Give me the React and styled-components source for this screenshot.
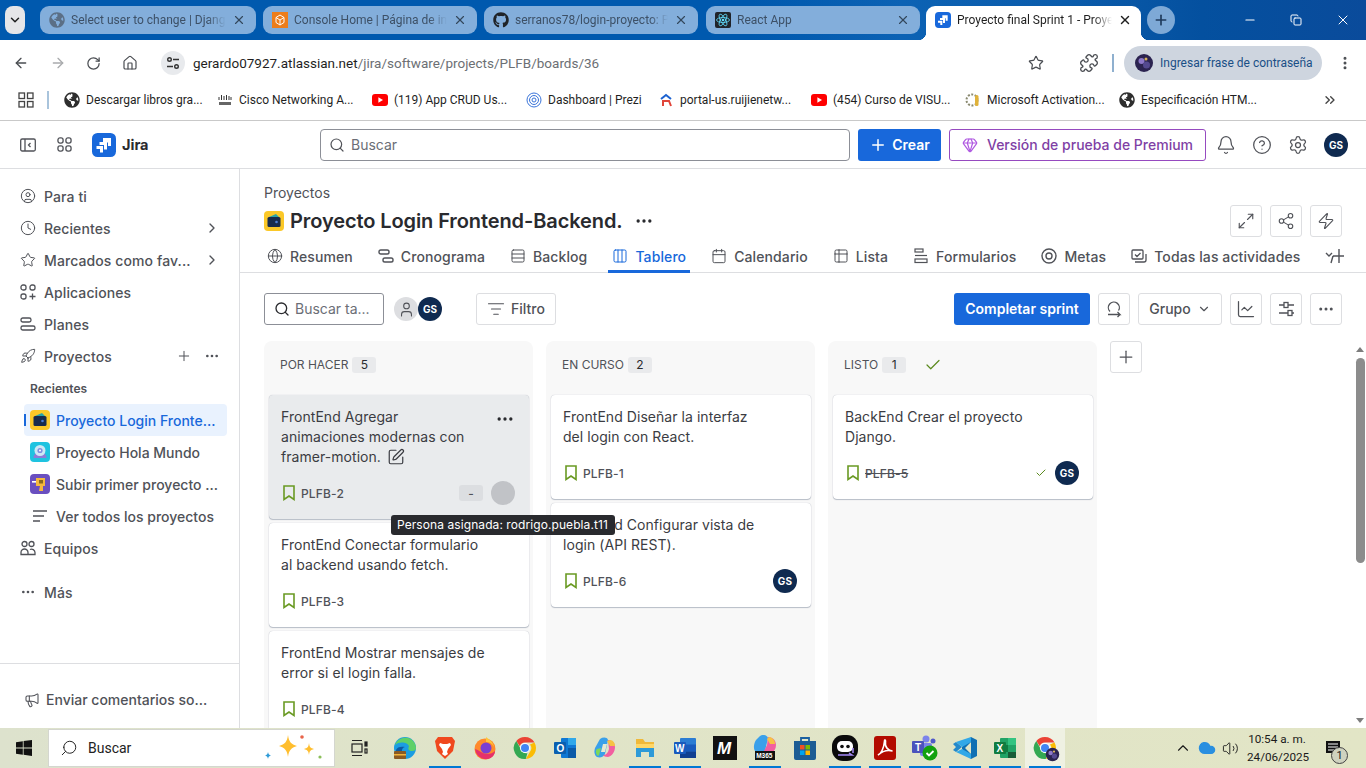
import React from 'react';
import styled, { createGlobalStyle } from 'styled-components';
import {
  ArrowLeft, ArrowRight, RotateCw, Star, Puzzle, EllipsisVertical, ChevronsRight, ChevronDown, ChevronRight,
  X, Plus, Minus, Clock, CircleUser, Rocket, Ellipsis, Megaphone, Search, Bell, CircleHelp, Settings,
  Gem, Globe, Calendar, Table2, Columns3, Rows3, Maximize2, Share2, Zap, ChartLine, ListFilter, Check,
  SquarePen, User, Volume2, ChevronUp, Cloud, Copy, House
} from 'lucide-react';
import { FaGithub, FaGlobeAmericas } from 'react-icons/fa';

const GlobalStyle = createGlobalStyle`
  html, body { margin: 0; padding: 0; height: 100%; overflow: hidden; background: #fff; }
  * { box-sizing: border-box; }
  #root { font-family: Inter, "Liberation Sans", sans-serif; }
`

const Page = styled.div`
  position: relative;
  width: 1366px;
  height: 768px;
  display: flex;
  flex-direction: column;
  overflow: hidden;
  background: #fff;
`

/* browser chrome */
const TabStrip = styled.div`
  height: 40px;
  flex: none;
  display: flex;
  align-items: flex-start;
  padding: 6px 0 0 5px;
  background: linear-gradient(90deg, #0059ae 0%, #0059ae 55%, #0c62b4 66%, #0b5cab 78%, #04509f 88%, #0a4b9b 100%);
  font-family: Roboto, "Liberation Sans", sans-serif;
`
const TabMenu = styled.div`
  width: 20px;
  height: 28px;
  margin-right: 15px;
  border-radius: 8px;
  background: #e6e6e8;
  display: flex;
  align-items: center;
  justify-content: center;
  color: #1f1f1f;
`
const Tab = styled.div`
  width: ${p => p.$w}px;
  margin-right: ${p => p.$mr}px;
  height: ${p => (p.$active ? 34 : 28)}px;
  flex: none;
  position: relative;
  display: flex;
  align-items: center;
  padding: ${p => (p.$active ? '0 9px 6px 9px' : '0 10px 0 9px')};
  gap: 6px;
  font-size: 12px;
  color: ${p => (p.$active ? '#1f1f1f' : '#3d5066')};
  background: ${p => (p.$active ? '#fff' : '#83aedb')};
  border-radius: ${p => (p.$active ? '9px 9px 0 0' : '9px')};
  ${p => p.$active && `
    &::before, &::after {
      content: '';
      position: absolute;
      bottom: 0;
      width: 8px;
      height: 8px;
    }
    &::before { left: -8px; background: radial-gradient(circle at 0 0, transparent 8px, #fff 8.5px); }
    &::after { right: -8px; background: radial-gradient(circle at 100% 0, transparent 8px, #fff 8.5px); }
  `}
`
const TabTitle = styled.span`
  flex: 1;
  white-space: nowrap;
  overflow: hidden;
  -webkit-mask-image: linear-gradient(90deg, #000 88%, transparent);
  mask-image: linear-gradient(90deg, #000 88%, transparent);
`
const TabClose = styled(X)`
  flex: none;
  color: ${p => (p.$active ? '#1f1f1f' : '#33475c')};
`
const NewTab = styled.div`
  width: 28px;
  height: 28px;
  margin-left: 6px;
  border-radius: 50%;
  background: #7ea9d6;
  color: #1f3a5c;
  display: flex;
  align-items: center;
  justify-content: center;
`
const WindowButtons = styled.div`
  margin-left: auto;
  display: flex;
  align-items: center;
  height: 28px;
  color: #fff;
  padding-right: 15px;
  gap: 33px;
`
const AddressRow = styled.div`
  height: 44px;
  flex: none;
  display: flex;
  align-items: center;
  padding: 2px 13px 0 13px;
  color: #4a4d52;
  font-family: Roboto, "Liberation Sans", sans-serif;
`
const NavIcons = styled.div`
  display: flex;
  align-items: center;
  gap: 20.5px;
  width: 148px;
`
const SiteBadge = styled.div`
  width: 24px;
  height: 24px;
  border-radius: 50%;
  background: #e8eaed;
  display: flex;
  align-items: center;
  justify-content: center;
  color: #333;
  margin-right: 8px;
`
const Url = styled.div`
  font-size: 13.5px;
  color: #6c6f74;
  flex: 1;
  b { font-weight: 400; color: #1f1f1f; }
`
const RightTools = styled.div`
  display: flex;
  align-items: center;
  gap: 13px;
`
const BookmarkStar = styled(Star)`
  margin-right: 22px;
`
const ToolDivider = styled.div`
  width: 2px;
  height: 18px;
  background: #8fb0cf;
`
const ProfilePill = styled.div`
  width: 198px;
  height: 34px;
  border-radius: 17px;
  background: #ced5df;
  margin-left: -3px;
  margin-right: 2px;
  display: flex;
  align-items: center;
  gap: 6px;
  padding-left: 10px;
  font-size: 12px;
  color: #1a4f86;
`
const BookmarkBar = styled.div`
  height: 37px;
  flex: none;
  display: flex;
  align-items: center;
  padding: 0 0 4px 18px;
  border-bottom: 1px solid #c9c9c9;
  font-family: Roboto, "Liberation Sans", sans-serif;
  font-size: 12px;
  color: #1f1f1f;
`
const BarDivider = styled.div`
  width: 2px;
  height: 18px;
  margin: 0 15px 0 13px;
  background: #a9c4dc;
`
const BookmarkItem = styled.div`
  width: ${p => p.$w}px;
  flex: none;
  display: flex;
  align-items: center;
  gap: 6px;
  white-space: nowrap;
  overflow: hidden;
`
const MoreBookmarks = styled.div`
  margin-left: auto;
  padding-right: 28px;
  display: flex;
  color: #444;
`

/* jira top bar */
const JiraHeader = styled.header`
  height: 48px;
  flex: none;
  display: flex;
  align-items: center;
  padding-left: 20px;
  border-bottom: 1px solid #dddee1;
  color: #505258;
`
const HeaderLeft = styled.div`
  width: 300px;
  flex: none;
  display: flex;
  align-items: center;
  gap: 20px;
`
const AppGrid = styled.svg`
  margin-left: 1px;
`
const LogoWrap = styled.div`
  display: flex;
  align-items: center;
  gap: 6px;
  font-weight: 700;
  font-size: 14.5px;
  color: #292a2e;
`
const GlobalSearch = styled.div`
  width: 530px;
  height: 32px;
  border: 1px solid #8c8f97;
  border-radius: 4px;
  display: flex;
  align-items: center;
  gap: 6px;
  padding-left: 8px;
  font-size: 14px;
  color: #6b6e76;
`
const CreateButton = styled.div`
  width: 83px;
  height: 32px;
  margin-left: 8px;
  border-radius: 3px;
  background: #1868db;
  color: #fff;
  font-size: 14px;
  font-weight: 600;
  display: flex;
  align-items: center;
  justify-content: center;
  gap: 5px;
`
const PremiumButton = styled.div`
  width: 257px;
  height: 32px;
  margin-left: 8px;
  border: 1px solid #964ac0;
  border-radius: 3px;
  color: #803fa5;
  font-size: 14px;
  font-weight: 500;
  display: flex;
  align-items: center;
  justify-content: center;
  gap: 9px;
`
const HeaderIcons = styled.div`
  display: flex;
  align-items: center;
  gap: 16px;
  margin-left: 10px;
  color: #505258;
`
const Avatar = styled.div`
  width: 24px;
  height: 24px;
  flex: none;
  border-radius: 50%;
  background: ${p => p.$bg || '#0f2a50'};
  color: ${p => p.$fg || '#fff'};
  font-size: 10px;
  font-weight: 700;
  display: flex;
  align-items: center;
  justify-content: center;
`

/* body */
const Body = styled.div`
  flex: 1;
  min-height: 0;
  display: flex;
`
const Sidebar = styled.aside`
  width: 240px;
  flex: none;
  display: flex;
  flex-direction: column;
  border-right: 1px solid #dddee1;
  padding-top: 11px;
  color: #505258;
  font-size: 14px;
  font-weight: 500;
`
const NavRow = styled.div`
  height: 32px;
  flex: none;
  display: flex;
  align-items: center;
  gap: 8px;
  padding: 0 20px;
  margin-top: ${p => p.$mt || 0}px;
  letter-spacing: .1px;
  white-space: nowrap;
`
const NavIcon = styled.span`
  width: 16px;
  flex: none;
  display: flex;
  justify-content: center;
`
const NavEnd = styled.div`
  margin-left: auto;
  display: flex;
  align-items: center;
  gap: 12px;
  margin-right: -1px;
`
const SubLabel = styled.div`
  height: 32px;
  flex: none;
  display: flex;
  align-items: center;
  padding-left: 30px;
  font-size: 12px;
  font-weight: 600;
  color: #505258;
`
const ProjectRow = styled.div`
  position: relative;
  width: 203px;
  height: 32px;
  flex: none;
  margin-left: 24px;
  padding-left: 6px;
  display: flex;
  align-items: center;
  gap: 6px;
  border-radius: 4px;
  white-space: nowrap;
  color: ${p => (p.$active ? '#1868db' : '#505258')};
  background: ${p => (p.$active ? '#e9f2fe' : 'transparent')};
  ${p => p.$active && `
    &::before {
      content: '';
      position: absolute;
      left: 0;
      top: 10px;
      width: 2px;
      height: 12px;
      background: #1868db;
    }
  `}
`
const AllProjectsIcon = styled.div`
  width: 20px;
  display: flex;
  justify-content: center;
`
const SideFooter = styled.div`
  margin-top: auto;
  height: 65px;
  flex: none;
  border-top: 1px solid #dddee1;
  display: flex;
  align-items: center;
  gap: 6px;
  padding: 7px 0 0 24px;
`
const Main = styled.main`
  flex: 1;
  min-width: 0;
  display: flex;
  flex-direction: column;
`
const ProjectHead = styled.div`
  flex: none;
  padding: 14px 24px 0;
`
const Breadcrumb = styled.div`
  height: 20px;
  font-size: 14px;
  line-height: 20px;
  color: #505258;
`
const TitleRow = styled.div`
  height: 36px;
  display: flex;
  align-items: center;
  gap: 6px;
`
const Title = styled.h1`
  margin: 0;
  font-size: 20px;
  font-weight: 600;
  letter-spacing: -.1px;
  color: #292a2e;
  white-space: nowrap;
`
const TitleMore = styled.div`
  display: flex;
  margin-left: 5px;
  color: #292a2e;
`
const ActionGroup = styled.div`
  margin-left: auto;
  display: flex;
  gap: 8px;
`
const SquareButton = styled.div`
  width: 32px;
  height: 32px;
  flex: none;
  border: 1px solid #dddee1;
  border-radius: 3px;
  color: #505258;
  background: #fff;
  display: flex;
  align-items: center;
  justify-content: center;
`
const TabsRow = styled.nav`
  height: 34px;
  flex: none;
  display: flex;
  gap: 17px;
  padding: 3px 0 0 23px;
  border-bottom: 1px solid #dddee1;
`
const ViewTab = styled.div`
  height: 31px;
  margin-bottom: -1px;
  display: flex;
  align-items: center;
  gap: 7px;
  padding: 0 4px;
  font-size: 14px;
  font-weight: 500;
  letter-spacing: .1px;
  white-space: nowrap;
  color: ${p => (p.$active ? '#1868db' : '#505258')};
  border-bottom: 3px solid ${p => (p.$active ? '#1868db' : 'transparent')};
`
const Toolbar = styled.div`
  height: 32px;
  flex: none;
  margin: 20px 24px 16px;
  display: flex;
  align-items: center;
  gap: 8px;
`
const BoardSearch = styled.div`
  width: 120px;
  height: 32px;
  border: 1px solid #8c8f97;
  border-radius: 3px;
  display: flex;
  align-items: center;
  gap: 5px;
  padding: 0 0 1px 9px;
  font-size: 14px;
  color: #6b6e76;
`
const AvatarStack = styled.div`
  display: flex;
  margin-left: 2px;
  width: 74px;
`
const OutlineButton = styled.div`
  width: ${p => p.$w}px;
  height: 32px;
  flex: none;
  border: 1px solid #dddee1;
  border-radius: 3px;
  display: flex;
  align-items: center;
  justify-content: center;
  gap: 6px;
  padding-bottom: 1px;
  font-size: 14px;
  font-weight: 500;
  color: #505258;
`
const PrimaryButton = styled.div`
  width: 136px;
  height: 32px;
  margin-left: auto;
  padding-bottom: 1px;
  border-radius: 3px;
  background: #1868db;
  color: #fff;
  font-size: 14px;
  font-weight: 600;
  display: flex;
  align-items: center;
  justify-content: center;
`
const BoardArea = styled.div`
  flex: 1;
  min-height: 0;
  display: flex;
  overflow: hidden;
`
const Columns = styled.div`
  flex: 1;
  display: flex;
  gap: 13px;
  padding-left: 24px;
`
const Column = styled.section`
  width: 269px;
  flex: none;
  background: #f8f8f8;
  border-radius: 8px 8px 0 0;
  padding: 0 4px 0 5px;
`
const ColumnHead = styled.div`
  height: 54px;
  display: flex;
  align-items: center;
  gap: 4px;
  padding: 0 0 7px 11px;
  font-size: 12px;
  font-weight: 400;
  color: #505258;
`
const Count = styled.span`
  min-width: 24px;
  height: 16px;
  border-radius: 3px;
  background: #e9eaec;
  color: #292a2e;
  font-size: 12px;
  display: flex;
  align-items: center;
  justify-content: center;
`
const DoneCheck = styled(Check)`
  margin-left: 14px;
  color: #5b8a1e;
`
const Card = styled.article`
  position: relative;
  width: 260px;
  margin-bottom: 4px;
  padding: 12px 13px 14px 12px;
  border-radius: 4px;
  background: ${p => (p.$hover ? '#e9ebed' : '#fff')};
  box-shadow: 0 1px 1px rgba(9, 30, 66, .25), 0 0 1px rgba(9, 30, 66, .3);
`
const CardTitle = styled.div`
  font-size: 14px;
  line-height: 20px;
  letter-spacing: .05px;
  color: #3b3c42;
  white-space: nowrap;
  svg { vertical-align: -4px; margin-left: 6px; color: #3b3c42; }
`
const CardMenu = styled.div`
  position: absolute;
  top: 14px;
  right: 14px;
  display: flex;
  color: #292a2e;
`
const CardFoot = styled.div`
  height: 24px;
  margin-top: 14px;
  display: flex;
  align-items: center;
  gap: 6px;
  padding-left: 2px;
  font-size: 12px;
  font-weight: 500;
  letter-spacing: .15px;
  color: #505258;
`
const CardKey = styled.span`
  text-decoration: ${p => (p.$done ? 'line-through' : 'none')};
`
const FootEnd = styled.div`
  margin-left: auto;
  display: flex;
  align-items: center;
  gap: 8px;
  margin-right: 1px;
`
const EstimateTag = styled.span`
  width: 24px;
  height: 16px;
  border-radius: 3px;
  background: #dcdee1;
  display: flex;
  align-items: center;
  justify-content: center;
`
const ScrollTrack = styled.div`
  width: 12px;
  flex: none;
  display: flex;
  flex-direction: column;
  align-items: center;
  padding-top: 6px;
`
const ScrollArrow = styled.div`
  width: 0;
  height: 0;
  border-left: 4px solid transparent;
  border-right: 4px solid transparent;
  border-${p => (p.$down ? 'top' : 'bottom')}: 5px solid #7d7d7d;
  margin-top: ${p => (p.$down ? 'auto' : 0)};
  margin-bottom: ${p => (p.$down ? 5 : 0)}px;
`
const ScrollThumb = styled.div`
  width: 9px;
  height: 205px;
  margin-top: 6px;
  border-radius: 5px;
  background: #8c8c8c;
`
const Tooltip = styled.div`
  position: absolute;
  left: 391px;
  top: 515px;
  height: 20px;
  width: 224px;
  padding-left: 6px;
  border-radius: 3px;
  background: #292a2e;
  color: #fff;
  font-size: 12px;
  letter-spacing: .08px;
  line-height: 20px;
  white-space: nowrap;
`

/* windows taskbar */
const Taskbar = styled.footer`
  height: 40px;
  flex: none;
  display: flex;
  align-items: center;
  background: linear-gradient(90deg, #dde2cd 0%, #e0e4c8 40%, #e2e5c6 100%);
  font-family: Roboto, "Liberation Sans", sans-serif;
`
const StartButton = styled.div`
  width: 48px;
  display: flex;
  justify-content: center;
`
const TaskSearch = styled.div`
  width: 287px;
  height: 38px;
  background: #fff;
  border: 1px solid #d4d6cf;
  display: flex;
  align-items: center;
  gap: 10px;
  padding-left: 11px;
  font-size: 14px;
  color: #222;
`
const TiltedSearch = styled(Search)`
  transform: scaleX(-1);
`
const TaskSpark = styled.div`
  margin-left: auto;
  display: flex;
  padding-right: 4px;
`
const TaskApps = styled.div`
  display: flex;
  align-items: center;
  height: 40px;
  margin-left: 4px;
`
const TaskApp = styled.div`
  position: relative;
  width: 40px;
  height: 40px;
  margin-right: ${p => p.$mr || 0}px;
  display: flex;
  align-items: center;
  justify-content: center;
  background: ${p => (p.$current ? '#eff1e3' : 'transparent')};
  ${p => p.$running && `
    &::after {
      content: '';
      position: absolute;
      left: 4px;
      right: 4px;
      bottom: 0;
      height: 2px;
      background: #0078d4;
    }
  `}
`
const ProfileOverlay = styled.span`
  position: absolute;
  right: 5px;
  bottom: 6px;
  display: flex;
`
const Tray = styled.div`
  margin-left: auto;
  display: flex;
  align-items: center;
  height: 40px;
  color: #1a1a1a;
`
const TrayIcons = styled.div`
  display: flex;
  align-items: center;
  gap: 6px;
`
const ClockText = styled.div`
  width: 60px;
  margin: 0 6px 0 8px;
  text-align: center;
  font-size: 11.7px;
  line-height: 18px;
  white-space: nowrap;
`
const NotifyWrap = styled.div`
  position: relative;
  width: 40px;
  height: 40px;
  display: flex;
  align-items: center;
  justify-content: center;
  margin-right: 13px;
`
const NotifyBadge = styled.span`
  position: absolute;
  right: 5px;
  bottom: 4px;
  width: 17px;
  height: 17px;
  border-radius: 50%;
  border: 1px solid #444;
  background: #cfd2bf;
  font-size: 11px;
  text-align: center;
  line-height: 15px;
`

const JiraLogo = ({ size = 24 }) => (
  <svg width={size} height={size} viewBox="0 0 24 24">
    <rect width="24" height="24" rx="5.5" fill="#1868db" />
    <path fill="#fff" d="M11 5h8v8h-3V9.500h-5zM7.500 9H15v7.500h-3V12H7.500zM4.500 13H11v6.500H8V16H4.500z" />
  </svg>
)
const WalletIcon = ({ size = 20 }) => (
  <svg width={size} height={size} viewBox="0 0 20 20">
    <rect width="20" height="20" rx="4" fill="#fbc828" />
    <path fill="#2aa3a8" d="M5 6l7-3 3 3z" />
    <rect x="3.500" y="6" width="13" height="10" rx="1.500" fill="#172b4d" />
    <circle cx="12.500" cy="11" r="1.300" fill="#4c7fd6" />
  </svg>
)
const WebcamIcon = () => (
  <svg width="20" height="20" viewBox="0 0 20 20">
    <rect width="20" height="20" rx="4" fill="#1fc3e0" />
    <path fill="#8e7cd8" d="M3.500 16a6.500 6.500 0 0 1 13 0z" />
    <circle cx="10" cy="8.500" r="5.500" fill="#cde8f5" />
    <circle cx="10" cy="8.500" r="2.600" fill="#7f8fe0" />
    <circle cx="10" cy="8.500" r="1" fill="#fff" />
  </svg>
)
const DrillIcon = () => (
  <svg width="20" height="20" viewBox="0 0 20 20">
    <rect width="20" height="20" rx="4" fill="#6a4fbf" />
    <rect x="2" y="7" width="4" height="1.600" fill="#fff" />
    <path fill="#f5b83d" d="M6 4h9v8h-2v5h-4l1-5H6z" />
    <rect x="9" y="6" width="4" height="3.500" fill="#8a6a1e" />
  </svg>
)
const ChromeIcon = ({ size = 24 }) => (
  <svg width={size} height={size} viewBox="0 0 24 24">
    <path fill="#ea4335" d="M12 1a11 11 0 0 1 9.500 5.500H12a5.500 5.500 0 0 0-5.200 3.700L3.300 5A11 11 0 0 1 12 1z" />
    <path fill="#fbbc04" d="M21.500 6.500A11 11 0 0 1 12.800 23l4-7a5.500 5.500 0 0 0 .2-7.500z" />
    <path fill="#34a853" d="M12.800 23A11 11 0 0 1 3.300 5l4.600 8.200a5.500 5.500 0 0 0 6.500 4z" />
    <circle cx="12" cy="12" r="5" fill="#fff" />
    <circle cx="12" cy="12" r="4" fill="#4285f4" />
  </svg>
)
const YoutubeIcon = () => (
  <svg width="16" height="16" viewBox="0 0 16 16">
    <rect y="2" width="16" height="12" rx="3" fill="#f00" />
    <path fill="#fff" d="M6.400 5.200L11 8l-4.600 2.800z" />
  </svg>
)
const ProfileThumb = ({ size = 20 }) => (
  <svg width={size} height={size} viewBox="0 0 20 20">
    <circle cx="10" cy="10" r="9" fill="#2b2350" />
    <circle cx="7.500" cy="8" r="3" fill="#8d78c9" />
    <circle cx="12.500" cy="12" r="3.500" fill="#54498f" />
    <circle cx="12" cy="6" r="1.500" fill="#d9b45b" />
  </svg>
)
const IssueMark = () => (
  <svg width="12" height="16" viewBox="0 0 12 16" fill="none" stroke="#6a9a23" strokeWidth="1.600">
    <path d="M1 1h10v13.500L6 11l-5 3.500z" />
  </svg>
)
const SvgLetter = styled.text`
  font-family: "Liberation Sans", sans-serif;
  font-weight: 700;
`

const taskIcons = {
  edge: (
    <svg width="24" height="24" viewBox="0 0 24 24">
      <circle cx="12" cy="12" r="11" fill="#1b9de2" />
      <path fill="#5fd068" d="M2 9c2-6 8-8 13-7 5 1 8 6 8 10 0 2-2 3.500-5 3-3-.4-3-3-2-4.500C15 6 6 5 2 9z" />
      <path fill="#0c59a4" d="M3 14c0 5 5 9 10 9-3-1-5-5-4-9 .4-2 2-3 3-3-4-1-8 0-9 3z" />
      <rect x="1" y="15" width="12" height="8" rx="1" fill="#8a5a24" />
      <rect x="1" y="18" width="12" height="1.500" fill="#f2b33b" />
    </svg>
  ),
  brave: (
    <svg width="24" height="24" viewBox="0 0 24 24">
      <path fill="#f0481e" d="M5 1h14l3 4-2 10-8 8-8-8L2 5z" />
      <path fill="#fff" d="M7 7l3 1h4l3-1 1 2-3 4-1 3 1 2-3 2-3-2 1-2-1-3-3-4z" />
    </svg>
  ),
  firefox: (
    <svg width="24" height="24" viewBox="0 0 24 24">
      <circle cx="12" cy="13" r="10.500" fill="#ff8a2b" />
      <path fill="#e6316a" d="M2 13c1 7 7 11 13 10 4-1 7-4 7-8-3 3-8 4-12 2-3-1.500-5-3-8-4z" />
      <circle cx="13" cy="12" r="5.500" fill="#7a3fd1" />
      <path fill="#ffc63a" d="M13 1c2 2 7 4 8 10-2-4-5-5-8-5z" />
    </svg>
  ),
  outlook: (
    <svg width="24" height="24" viewBox="0 0 24 24">
      <rect x="8" y="2" width="15" height="20" rx="1" fill="#0f78d4" />
      <rect x="15" y="2" width="8" height="7" fill="#30a8ea" />
      <rect x="15" y="12" width="8" height="10" fill="#0a5aa8" />
      <rect x="1" y="6" width="12" height="12" rx="1" fill="#0a5fb0" />
      <SvgLetter x="3.500" y="16" fontSize="10" fill="#fff">O</SvgLetter>
    </svg>
  ),
  copilot: (
    <svg width="24" height="24" viewBox="0 0 24 24">
      <path fill="#3aa0ea" d="M7 3c3-2 7-2 8 1l-3 14c-1 3-5 4-8 3-3-2-3-6-2-9z" />
      <path fill="#f25fa0" d="M15 4c3 0 7 2 7 7 0 5-3 9-7 10-3 0-4-1-5-2 3 0 5-2 6-6z" />
      <path fill="#7fd858" d="M5 20c-2-1-3-5-1-7l4-1-2 7z" />
      <path fill="#f6c244" d="M17 4c3 0 5 3 5 6l-5 0-3-5z" />
      <path fill="#e7e9d2" d="M10 8h4l-2 8h-4z" />
    </svg>
  ),
  folder: (
    <svg width="24" height="24" viewBox="0 0 24 24">
      <path fill="#f0b93a" d="M3 3h7l2 3h9v6H3z" />
      <path fill="#ffd766" d="M3 8h18v5H3z" />
      <path fill="#2d9ad8" d="M3 12h18v9h-5v-5H8v5H3z" />
    </svg>
  ),
  word: (
    <svg width="24" height="24" viewBox="0 0 24 24">
      <rect x="7" y="2" width="16" height="20" rx="1" fill="#2b7cd3" />
      <rect x="7" y="8.500" width="16" height="7" fill="#185abd" />
      <rect x="7" y="15.500" width="16" height="6.500" fill="#103f91" />
      <rect x="1" y="6" width="12" height="12" rx="1" fill="#185abd" />
      <SvgLetter x="2" y="16" fontSize="10" fill="#fff">W</SvgLetter>
    </svg>
  ),
  mono: (
    <svg width="24" height="24" viewBox="0 0 24 24">
      <rect width="24" height="24" fill="#111" />
      <SvgLetter x="4" y="18" fontSize="17" fontStyle="italic" fill="#fff">M</SvgLetter>
    </svg>
  ),
  m365: (
    <svg width="24" height="26" viewBox="0 0 24 26">
      <path fill="#3aa0ea" d="M7 1c3-2 7-1 8 2l-3 13H2C0 13 1 8 3 5z" />
      <path fill="#f25fa0" d="M15 2c3 0 8 2 8 8 0 4-2 6-4 8H10l4-8z" />
      <path fill="#f6c244" d="M16 2c3 0 6 3 6 7h-5l-3-5z" />
      <rect x="2" y="16" width="20" height="9" fill="#111" />
      <SvgLetter x="3.200" y="23" fontSize="6.500" fill="#fff">M365</SvgLetter>
    </svg>
  ),
  store: (
    <svg width="24" height="26" viewBox="0 0 24 26">
      <path fill="none" stroke="#1a5fa0" strokeWidth="1.800" d="M8 6V3h8v3" />
      <path fill="#1c5c94" d="M1 6h22v17a2 2 0 0 1-2 2H3a2 2 0 0 1-2-2z" />
      <rect x="7" y="10" width="4.500" height="4.500" fill="#f25022" />
      <rect x="12.500" y="10" width="4.500" height="4.500" fill="#7fba00" />
      <rect x="7" y="15.500" width="4.500" height="4.500" fill="#00a4ef" />
      <rect x="12.500" y="15.500" width="4.500" height="4.500" fill="#ffb900" />
    </svg>
  ),
  robot: (
    <svg width="26" height="26" viewBox="0 0 26 26">
      <rect width="26" height="26" rx="11" fill="#0b0b0b" />
      <rect x="5" y="6" width="16" height="11" rx="5" fill="#fff" />
      <circle cx="10" cy="11.500" r="1.800" fill="#111" />
      <circle cx="16" cy="11.500" r="1.800" fill="#111" />
      <path stroke="#a78bfa" strokeWidth="1.500" fill="none" d="M6 20h14l-3-2M21 13v5" />
    </svg>
  ),
  pdf: (
    <svg width="24" height="26" viewBox="0 0 24 26">
      <rect x="1" y="1" width="22" height="24" rx="3" fill="#b30b00" />
      <path fill="none" stroke="#fff" strokeWidth="1.600" d="M5 20c3-1 6-7 6.500-14 .1-2 1.500-1 1 1-1 5 3 9 7 9-4-1-10 0-14.500 4z" />
    </svg>
  ),
  teams: (
    <svg width="28" height="28" viewBox="0 0 28 28">
      <circle cx="15" cy="5" r="3.500" fill="#7b83eb" />
      <circle cx="22" cy="7" r="2.500" fill="#5059c9" />
      <rect x="9" y="9" width="12" height="13" rx="2" fill="#7b83eb" />
      <rect x="1" y="7" width="12" height="12" rx="1" fill="#4b53bc" />
      <SvgLetter x="4" y="17" fontSize="10" fill="#fff">T</SvgLetter>
      <circle cx="19" cy="19" r="7.500" fill="#13a10e" />
      <path fill="none" stroke="#fff" strokeWidth="1.800" d="M15.500 19l2.500 2.500 4.500-4.500" />
    </svg>
  ),
  vscode: (
    <svg width="26" height="26" viewBox="0 0 26 26">
      <path fill="#2489ca" d="M1 9l3-2 6 5-6 5-3-2 3-3z" />
      <path fill="#1070b3" d="M10 12L19 2l6 3v16l-6 3-9-10zm9-5l-6 6 6 6z" />
      <path fill="#31a8e8" d="M4 7l15-5 0 5-9 5z" />
      <path fill="#31a8e8" d="M4 17l15 7v-5l-9-5z" />
    </svg>
  ),
  excel: (
    <svg width="24" height="24" viewBox="0 0 24 24">
      <rect x="7" y="2" width="16" height="20" rx="1" fill="#21a366" />
      <rect x="15" y="2" width="8" height="7" fill="#33c481" />
      <rect x="7" y="9" width="8" height="7" fill="#107c41" />
      <rect x="15" y="16" width="8" height="6" fill="#185c37" />
      <rect x="1" y="6" width="12" height="12" rx="1" fill="#107c41" />
      <SvgLetter x="3.500" y="16" fontSize="10" fill="#fff">X</SvgLetter>
    </svg>
  ),
}

const taskList = [
  { id: 'edge' }, { id: 'brave', running: true }, { id: 'firefox' }, { id: 'chrome1' }, { id: 'outlook' },
  { id: 'copilot' }, { id: 'folder', running: true }, { id: 'word', running: true }, { id: 'mono' },
  { id: 'm365', running: true }, { id: 'store' }, { id: 'robot', running: true }, { id: 'pdf', running: true },
  { id: 'teams', running: true }, { id: 'vscode', running: true }, { id: 'excel', running: true },
]

const bookmarks = [
  { w: 153, label: 'Descargar libros gra...', icon: <FaGlobeAmericas size={16} color="#2e2e2e" /> },
  { w: 155, label: 'Cisco Networking A...', icon: (
    <svg width="16" height="16" viewBox="0 0 16 16">
      <path stroke="#333" strokeWidth="1" d="M2 5v3M4.500 3v5M7 4v4M9.500 3v5M12 4v4M14 5v3" />
      <rect x="2" y="10" width="12" height="3" fill="#666" />
    </svg>
  ) },
  { w: 154, label: '(119) App CRUD Us...', icon: <YoutubeIcon /> },
  { w: 132, label: 'Dashboard | Prezi', icon: (
    <svg width="16" height="16" viewBox="0 0 16 16" fill="none" stroke="#3a74d9">
      <circle cx="8" cy="8" r="7" /><circle cx="8" cy="8" r="4.500" /><circle cx="8" cy="8" r="2" />
    </svg>
  ) },
  { w: 153, label: 'portal-us.ruijienetw...', icon: (
    <svg width="16" height="16" viewBox="0 0 16 16" fill="none" strokeWidth="2">
      <path stroke="#1c62d1" d="M3 7l5-4 5 4" /><path stroke="#e0453a" d="M5 14V9h6l2 5" />
    </svg>
  ) },
  { w: 154, label: '(454) Curso de VISU...', icon: <YoutubeIcon /> },
  { w: 154, label: 'Microsoft Activation...', icon: (
    <svg width="16" height="16" viewBox="0 0 16 16">
      <circle cx="7" cy="8" r="5.500" fill="none" stroke="#8a8a70" strokeWidth="2" strokeDasharray="2 1.500" />
      <rect x="10" y="3" width="3.500" height="11" rx="1.500" fill="#e0b23a" />
    </svg>
  ) },
  { w: 180, label: 'Especificación HTM...', icon: <FaGlobeAmericas size={16} color="#2e2e2e" /> },
]

const sections = [
  { label: 'Resumen', Icon: Globe },
  { label: 'Cronograma', custom: (
    <svg width="16" height="16" viewBox="0 0 16 16" fill="none" stroke="currentColor" strokeWidth="1.400">
      <rect x="1" y="2" width="10" height="4" rx="1.800" /><rect x="5" y="10" width="10" height="4" rx="1.800" />
    </svg>
  ) },
  { label: 'Backlog', Icon: Rows3 },
  { label: 'Tablero', Icon: Columns3, active: true },
  { label: 'Calendario', Icon: Calendar },
  { label: 'Lista', Icon: Table2 },
  { label: 'Formularios', custom: (
    <svg width="16" height="16" viewBox="0 0 16 16" fill="none" stroke="currentColor" strokeWidth="1.200">
      <rect x="2" y="1" width="8" height="3" /><path d="M2 7.500h12" /><rect x="2" y="11" width="12" height="3.500" />
    </svg>
  ) },
  { label: 'Metas', custom: (
    <svg width="16" height="16" viewBox="0 0 16 16" fill="none" stroke="currentColor" strokeWidth="1.400">
      <circle cx="8" cy="8" r="7" /><circle cx="8" cy="8" r="3" />
    </svg>
  ) },
  { label: 'Todas las actividades', custom: (
    <svg width="16" height="16" viewBox="0 0 16 16" fill="none" stroke="currentColor" strokeWidth="1.300">
      <rect x="1" y="2" width="11" height="9" rx="1" /><path d="M4 6.500l2 2 3.500-3.500M15 6v6a2 2 0 0 1-2 2H4" />
    </svg>
  ) },
]

const BoardCard = ({ lines, id, done, hover, assignee }) => (
  <Card $hover={hover}>
    <CardTitle>
      {lines.map((line, i) => <div key={i}>{line}{hover && i === 2 && <SquarePen size={18} strokeWidth={1.600} />}</div>)}
    </CardTitle>
    {hover && <CardMenu><Ellipsis size={20} strokeWidth={2} /></CardMenu>}
    <CardFoot>
      <IssueMark />
      <CardKey $done={done}>{id}</CardKey>
      <FootEnd>
        {hover && <EstimateTag>-</EstimateTag>}
        {done && <Check size={12} strokeWidth={2} color="#5b8a1e" />}
        {hover && <Avatar $bg="#c1c3c7" />}
        {assignee && <Avatar>GS</Avatar>}
      </FootEnd>
    </CardFoot>
  </Card>
)

export default function App() {
  return (
    <Page>
      <GlobalStyle />
      <TabStrip>
        <TabMenu><ChevronDown size={14} strokeWidth={2.500} /></TabMenu>
        <Tab $w={216} $mr={7}>
          <FaGlobeAmericas size={16} color="#5b6f86" />
          <TabTitle>Select user to change | Django site admin</TabTitle>
          <TabClose size={14} />
        </Tab>
        <Tab $w={214} $mr={7}>
          <svg width="16" height="16" viewBox="0 0 16 16">
            <rect width="16" height="16" fill="#ed7d1a" />
            <path fill="none" stroke="#fff" d="M8 3l4 2.500v5L8 13l-4-2.500v-5zM4 5.500L8 8l4-2.500M8 8v5" />
          </svg>
          <TabTitle>Console Home | Página de inicio</TabTitle>
          <TabClose size={14} />
        </Tab>
        <Tab $w={214} $mr={8}>
          <FaGithub size={16} color="#1f2328" />
          <TabTitle>serranos78/login-proyecto: Proyecto</TabTitle>
          <TabClose size={14} />
        </Tab>
        <Tab $w={214} $mr={6}>
          <svg width="16" height="16" viewBox="0 0 16 16">
            <rect width="16" height="16" rx="2" fill="#20232a" />
            <g fill="none" stroke="#61dafb" strokeWidth=".8">
              <ellipse cx="8" cy="8" rx="6.500" ry="2.500" />
              <ellipse cx="8" cy="8" rx="6.500" ry="2.500" transform="rotate(60 8 8)" />
              <ellipse cx="8" cy="8" rx="6.500" ry="2.500" transform="rotate(120 8 8)" />
            </g>
            <circle cx="8" cy="8" r="1.300" fill="#61dafb" />
          </svg>
          <TabTitle>React App</TabTitle>
          <TabClose size={14} />
        </Tab>
        <Tab $w={215} $mr={0} $active>
          <JiraLogo size={16} />
          <TabTitle>Proyecto final Sprint 1 - Proyecto Login</TabTitle>
          <TabClose size={14} $active strokeWidth={2.500} />
        </Tab>
        <NewTab><Plus size={16} strokeWidth={2.500} /></NewTab>
        <WindowButtons>
          <Minus size={14} />
          <Copy size={12} />
          <X size={16} strokeWidth={1.500} />
        </WindowButtons>
      </TabStrip>

      <AddressRow>
        <NavIcons>
          <ArrowLeft size={16} strokeWidth={2} />
          <ArrowRight size={16} strokeWidth={2} color="#a9abad" />
          <RotateCw size={15} strokeWidth={2} />
          <House size={16} strokeWidth={1.800} />
        </NavIcons>
        <SiteBadge>
          <svg width="14" height="14" viewBox="0 0 14 14" fill="none" stroke="#333" strokeWidth="1.400">
            <circle cx="3.500" cy="3.500" r="1.800" /><path d="M7 3.500h6M1 10.500h6" /><circle cx="10.500" cy="10.500" r="1.800" />
          </svg>
        </SiteBadge>
        <Url><b>gerardo07927.atlassian.net</b>/jira/software/projects/PLFB/boards/36</Url>
        <RightTools>
          <BookmarkStar size={16} strokeWidth={1.800} />
          <Puzzle size={20} strokeWidth={1.600} />
          <ToolDivider />
          <ProfilePill><ProfileThumb size={20} />Ingresar frase de contraseña</ProfilePill>
          <EllipsisVertical size={16} strokeWidth={2.500} />
        </RightTools>
      </AddressRow>

      <BookmarkBar>
        <svg width="16" height="16" viewBox="0 0 16 16" fill="none" stroke="#444" strokeWidth="1.300">
          <rect x="1" y="1" width="5.500" height="5.500" /><rect x="9.500" y="1" width="5.500" height="5.500" />
          <rect x="1" y="9.500" width="5.500" height="5.500" /><rect x="9.500" y="9.500" width="5.500" height="5.500" />
        </svg>
        <BarDivider />
        {bookmarks.map(b => (
          <BookmarkItem key={b.label} $w={b.w}>{b.icon}{b.label}</BookmarkItem>
        ))}
        <MoreBookmarks><ChevronsRight size={16} /></MoreBookmarks>
      </BookmarkBar>

      <JiraHeader>
        <HeaderLeft>
          <svg width="16" height="16" viewBox="0 0 16 16" fill="none" stroke="#505258" strokeWidth="1.300">
            <rect x=".7" y="2" width="14.600" height="12" rx="1.500" /><path d="M5 2v12M10.500 6L8.500 8l2 2" />
          </svg>
          <AppGrid width="15" height="15" viewBox="0 0 16 16" fill="none" stroke="#505258" strokeWidth="1.400">
            <rect x="1" y="1" width="5.500" height="5.500" rx="2.200" /><rect x="9.500" y="1" width="5.500" height="5.500" rx="2.200" />
            <rect x="1" y="9.500" width="5.500" height="5.500" rx="2.200" /><rect x="9.500" y="9.500" width="5.500" height="5.500" rx="2.200" />
          </AppGrid>
          <LogoWrap><JiraLogo />Jira</LogoWrap>
        </HeaderLeft>
        <GlobalSearch><Search size={16} strokeWidth={1.800} color="#505258" />Buscar</GlobalSearch>
        <CreateButton><Plus size={18} strokeWidth={2} />Crear</CreateButton>
        <PremiumButton><Gem size={16} strokeWidth={1.800} color="#af59e1" />Versión de prueba de Premium</PremiumButton>
        <HeaderIcons>
          <Bell size={20} strokeWidth={1.500} />
          <CircleHelp size={20} strokeWidth={1.500} />
          <Settings size={20} strokeWidth={1.500} />
          <Avatar>GS</Avatar>
        </HeaderIcons>
      </JiraHeader>

      <Body>
        <Sidebar>
          <NavRow><NavIcon><CircleUser size={18} strokeWidth={1.500} /></NavIcon>Para ti</NavRow>
          <NavRow><NavIcon><Clock size={18} strokeWidth={1.500} /></NavIcon>Recientes<NavEnd><ChevronRight size={16} /></NavEnd></NavRow>
          <NavRow><NavIcon><Star size={18} strokeWidth={1.500} /></NavIcon>Marcados como fav...<NavEnd><ChevronRight size={16} /></NavEnd></NavRow>
          <NavRow>
            <svg width="16" height="16" viewBox="0 0 16 16" fill="none" stroke="currentColor" strokeWidth="1.300">
              <rect x="1" y="1" width="5" height="5" rx="2" /><rect x="10" y="1" width="5" height="5" rx="2" />
              <rect x="1" y="10" width="5" height="5" rx="2" /><path d="M12.500 9.500v6M9.500 12.500h6" />
            </svg>
            Aplicaciones
          </NavRow>
          <NavRow>
            <svg width="16" height="16" viewBox="0 0 16 16" fill="none" stroke="currentColor" strokeWidth="1.300">
              <rect x="1" y="2" width="10" height="4" rx="1.800" /><rect x="1" y="10" width="14" height="4" rx="1.800" />
            </svg>
            Planes
          </NavRow>
          <NavRow>
            <NavIcon><Rocket size={18} strokeWidth={1.500} /></NavIcon>Proyectos
            <NavEnd><Plus size={16} strokeWidth={1.500} /><Ellipsis size={16} /></NavEnd>
          </NavRow>
          <SubLabel>Recientes</SubLabel>
          <ProjectRow $active><WalletIcon />Proyecto Login Fronte...</ProjectRow>
          <ProjectRow><WebcamIcon />Proyecto Hola Mundo</ProjectRow>
          <ProjectRow><DrillIcon />Subir primer proyecto ...</ProjectRow>
          <ProjectRow>
            <AllProjectsIcon>
              <svg width="16" height="14" viewBox="0 0 16 14" stroke="currentColor" strokeWidth="1.400">
                <path d="M1 2h14M1 7h11M1 12h7" />
              </svg>
            </AllProjectsIcon>
            Ver todos los proyectos
          </ProjectRow>
          <NavRow>
            <svg width="16" height="16" viewBox="0 0 16 16" fill="none" stroke="currentColor" strokeWidth="1.300">
              <circle cx="4.500" cy="4" r="2.500" /><circle cx="11.500" cy="4" r="2.500" />
              <path d="M1 14.500v-2a3.500 3.500 0 0 1 7 0v2zM10 9.500a3.500 3.500 0 0 1 5 3v2h-7" />
            </svg>
            Equipos
          </NavRow>
          <NavRow $mt={12}><Ellipsis size={16} />Más</NavRow>
          <SideFooter><Megaphone size={16} strokeWidth={1.600} />Enviar comentarios so...</SideFooter>
        </Sidebar>

        <Main>
          <ProjectHead>
            <Breadcrumb>Proyectos</Breadcrumb>
            <TitleRow>
              <WalletIcon />
              <Title>Proyecto Login Frontend-Backend.</Title>
              <TitleMore><Ellipsis size={20} /></TitleMore>
              <ActionGroup>
                <SquareButton><Maximize2 size={18} strokeWidth={1.500} /></SquareButton>
                <SquareButton><Share2 size={18} strokeWidth={1.500} /></SquareButton>
                <SquareButton><Zap size={18} strokeWidth={1.500} /></SquareButton>
              </ActionGroup>
            </TitleRow>
          </ProjectHead>
          <TabsRow>
            {sections.map(({ label, Icon, custom, active }) => (
              <ViewTab key={label} $active={active}>
                <NavIcon>{custom || <Icon size={18} strokeWidth={1.500} />}</NavIcon>{label}
              </ViewTab>
            ))}
            <ViewTab>
              <svg width="20" height="16" viewBox="0 0 20 16" fill="none" stroke="currentColor" strokeWidth="1.400">
                <path d="M14 1v14M8 8h11M1 5l3 3 3-3M6 15l2-7" />
              </svg>
            </ViewTab>
          </TabsRow>
          <Toolbar>
            <BoardSearch><Search size={16} strokeWidth={2} color="#292a2e" />Buscar ta...</BoardSearch>
            <AvatarStack>
              <Avatar $bg="#dddee1" $fg="#505258"><User size={17} strokeWidth={1.500} /></Avatar>
              <Avatar>GS</Avatar>
            </AvatarStack>
            <OutlineButton $w={80}><ListFilter size={18} strokeWidth={1.500} />Filtro</OutlineButton>
            <PrimaryButton>Completar sprint</PrimaryButton>
            <SquareButton>
              <svg width="18" height="18" viewBox="0 0 18 18" fill="none" stroke="currentColor" strokeWidth="1.300">
                <path d="M5 11.500a5.500 5.500 0 1 1 8.500-1M3 14.500h12l-2.500-2.500M15 14.500l-2.500 2.500" />
              </svg>
            </SquareButton>
            <OutlineButton $w={84}>Grupo<ChevronDown size={14} /></OutlineButton>
            <SquareButton><ChartLine size={20} strokeWidth={1.500} /></SquareButton>
            <SquareButton>
              <svg width="17" height="16" viewBox="0 0 17 16" fill="none" stroke="currentColor" strokeWidth="1.300">
                <path d="M1 4h5M10 4h6M1 12h9M14 12h2" /><rect x="6" y="1.500" width="4" height="5" /><rect x="10" y="9.500" width="4" height="5" />
              </svg>
            </SquareButton>
            <SquareButton><Ellipsis size={18} /></SquareButton>
          </Toolbar>
          <BoardArea>
            <Columns>
              <Column>
                <ColumnHead>POR HACER<Count>5</Count></ColumnHead>
                <BoardCard hover lines={['FrontEnd Agregar', 'animaciones modernas con', 'framer-motion.']} id="PLFB-2" />
                <BoardCard lines={['FrontEnd Conectar formulario', 'al backend usando fetch.']} id="PLFB-3" />
                <BoardCard lines={['FrontEnd Mostrar mensajes de', 'error si el login falla.']} id="PLFB-4" />
              </Column>
              <Column>
                <ColumnHead>EN CURSO<Count>2</Count></ColumnHead>
                <BoardCard lines={['FrontEnd Diseñar la interfaz', 'del login con React.']} id="PLFB-1" />
                <BoardCard assignee lines={['FrontEnd Configurar vista de', 'login (API REST).']} id="PLFB-6" />
              </Column>
              <Column>
                <ColumnHead>LISTO<Count>1</Count><DoneCheck size={18} strokeWidth={1.600} /></ColumnHead>
                <BoardCard done assignee lines={['BackEnd Crear el proyecto', 'Django.']} id="PLFB-5" />
              </Column>
              <SquareButton><Plus size={20} strokeWidth={1.500} /></SquareButton>
            </Columns>
            <ScrollTrack>
              <ScrollArrow />
              <ScrollThumb />
              <ScrollArrow $down />
            </ScrollTrack>
          </BoardArea>
        </Main>
      </Body>

      <Taskbar>
        <StartButton>
          <svg width="16" height="16" viewBox="0 0 16 16" fill="#111">
            <path d="M0 2.200l6.800-1v6.400H0zM7.600 1.100L16 0v7.600H7.600zM0 8.400h6.800v6.400l-6.800-1zM7.600 8.400H16V16l-8.400-1.200z" />
          </svg>
        </StartButton>
        <TaskSearch>
          <TiltedSearch size={18} strokeWidth={1.300} />
          Buscar
          <TaskSpark>
            <svg width="66" height="28" viewBox="0 0 66 28">
              <path fill="#ffbe2e" d="M24 1c1 7 3 9 9 11-6 2-8 4-9 11-1-7-3-9-9-11 6-2 8-4 9-11z" />
              <path fill="#ffbe2e" d="M45 9c.5 4 1.500 5 5 6-3.500 1-4.500 2-5 6-.5-4-1.500-5-5-6 3.500-1 4.500-2 5-6z" />
              <path fill="#2f9bd8" d="M4 18c.3 2 1 3 3 3.500-2 .5-2.700 1.500-3 3.500-.3-2-1-3-3-3.500 2-.5 2.700-1.500 3-3.500z" />
              <circle cx="38" cy="3" r="1.800" fill="#e8644a" />
              <circle cx="56" cy="23" r="1.600" fill="#8bbf5a" />
            </svg>
          </TaskSpark>
        </TaskSearch>
        <TaskApps>
          <TaskApp $mr={6}>
            <svg width="18" height="18" viewBox="0 0 18 18" fill="none" stroke="#222" strokeWidth="1.200">
              <path d="M2 1.500h10M2 16.500h10" /><rect x="2" y="5" width="10" height="8" /><rect x="15" y="3" width="2" height="4" fill="#222" /><rect x="15" y="10" width="2" height="4" />
            </svg>
          </TaskApp>
          {taskList.map(t => (
            <TaskApp key={t.id} $running={t.running}>
              {t.id === 'chrome1' ? <ChromeIcon /> : taskIcons[t.id]}
            </TaskApp>
          ))}
          <TaskApp $current $running>
            <ChromeIcon />
            <ProfileOverlay><ProfileThumb size={15} /></ProfileOverlay>
          </TaskApp>
        </TaskApps>
        <Tray>
          <TrayIcons>
            <ChevronUp size={18} strokeWidth={1.500} />
            <Cloud size={18} fill="#2a8fe0" color="#2a8fe0" />
            <Volume2 size={17} strokeWidth={1.300} />
          </TrayIcons>
          <ClockText>10:54 a. m.<br />24/06/2025</ClockText>
          <NotifyWrap>
            <svg width="14" height="14" viewBox="0 0 14 14">
              <rect width="14" height="12" fill="#111" />
              <path stroke="#fff" d="M2 3h10M2 6h10M2 9h6" />
            </svg>
            <NotifyBadge>1</NotifyBadge>
          </NotifyWrap>
        </Tray>
      </Taskbar>

      <Tooltip>Persona asignada: rodrigo.puebla.t11</Tooltip>
    </Page>
  );
}
